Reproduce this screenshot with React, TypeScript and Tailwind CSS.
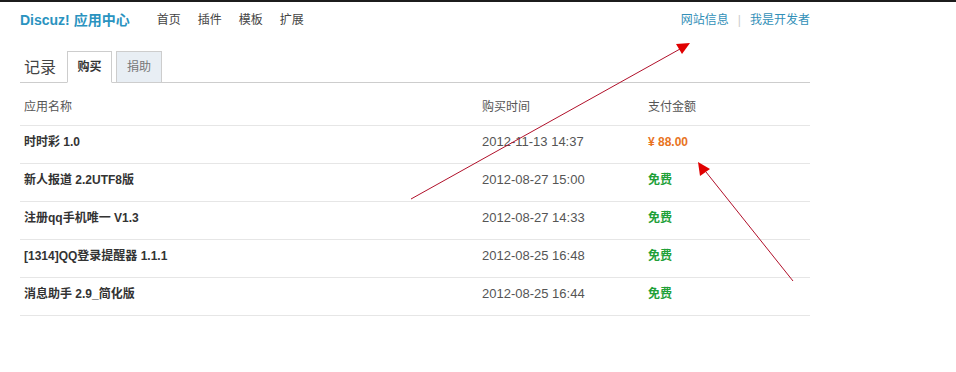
const font = 'font-["Liberation_Sans","Noto_Sans_CJK_SC",sans-serif]';

const records = [
  { name: '时时彩 1.0', time: '2012-11-13 14:37', price: '¥ 88.00', paid: true },
  { name: '新人报道 2.2UTF8版', time: '2012-08-27 15:00', price: '免费', paid: false },
  { name: '注册qq手机唯一 V1.3', time: '2012-08-27 14:33', price: '免费', paid: false },
  { name: '[1314]QQ登录提醒器 1.1.1', time: '2012-08-25 16:48', price: '免费', paid: false },
  { name: '消息助手 2.9_简化版', time: '2012-08-25 16:44', price: '免费', paid: false },
];

const nav = ['首页', '插件', '模板', '扩展'];

function Arrows() {
  return (
    <svg className="pointer-events-none absolute inset-0" width="956" height="372">
      <line x1="411" y1="199" x2="680" y2="49" stroke="#b0102a" strokeWidth="1" />
      <polygon points="690,43 676,44 682,54" fill="#e00000" />
      <line x1="793" y1="281" x2="706" y2="172" stroke="#b0102a" strokeWidth="1" />
      <polygon points="698,162 700,176 710,169" fill="#e00000" />
    </svg>
  );
}

export default function App() {
  return (
    <div className={`relative h-[372px] w-[956px] overflow-hidden bg-white text-[12px] ${font}`}>
      <div className="h-[2px] bg-[#1c1c1c]" />

      <div className="mx-5 w-[790px]">
        {/* top bar */}
        <div className="flex h-[36px] items-center justify-between">
          <div className="flex items-center">
            <span className="text-[14px] font-bold text-[#2a93c0]">Discuz! 应用中心</span>
            <nav className="ml-[27px] flex gap-[17px] text-[#444]">
              {nav.map((n) => (
                <span key={n}>{n}</span>
              ))}
            </nav>
          </div>
          <div className="flex items-center text-[#3290b8]">
            <span>网站信息</span>
            <span className="mx-[9px] text-[#ccc]">|</span>
            <span>我是开发者</span>
          </div>
        </div>

        {/* tabs */}
        <div className="mt-[13px] flex items-end border-b border-[#cdcdcd]">
          <span className="mb-[6px] ml-1 mr-[11px] text-[16px] leading-none text-[#444]">记录</span>
          <div className="-mb-px flex h-[32px] w-[45px] items-center justify-center border border-b-white border-[#cdcdcd] bg-white font-bold text-[#333]">
            购买
          </div>
          <div className="ml-[4px] flex h-[31px] w-[46px] items-center justify-center border border-b-0 border-[#cdcdcd] bg-[#e8eef4] text-[#777]">
            捐助
          </div>
        </div>

        {/* table */}
        <div>
          <div className="flex h-[43px] items-center border-b border-[#e6e6e6] pt-[6px] text-[#555]">
            <span className="w-[462px] pl-1">应用名称</span>
            <span className="w-[166px]">购买时间</span>
            <span>支付金额</span>
          </div>
          {records.map((r) => (
            <div key={r.time} className="flex h-[38px] items-center border-b border-[#e6e6e6] pb-[5px]">
              <span className="w-[462px] pl-1 font-bold text-[#333]">{r.name}</span>
              <span className="w-[166px] text-[13px] text-[#555]">{r.time}</span>
              <span className={`font-bold ${r.paid ? 'text-[#e8731e]' : 'text-[#21a038]'}`}>{r.price}</span>
            </div>
          ))}
        </div>
      </div>

      <Arrows />
    </div>
  );
}
